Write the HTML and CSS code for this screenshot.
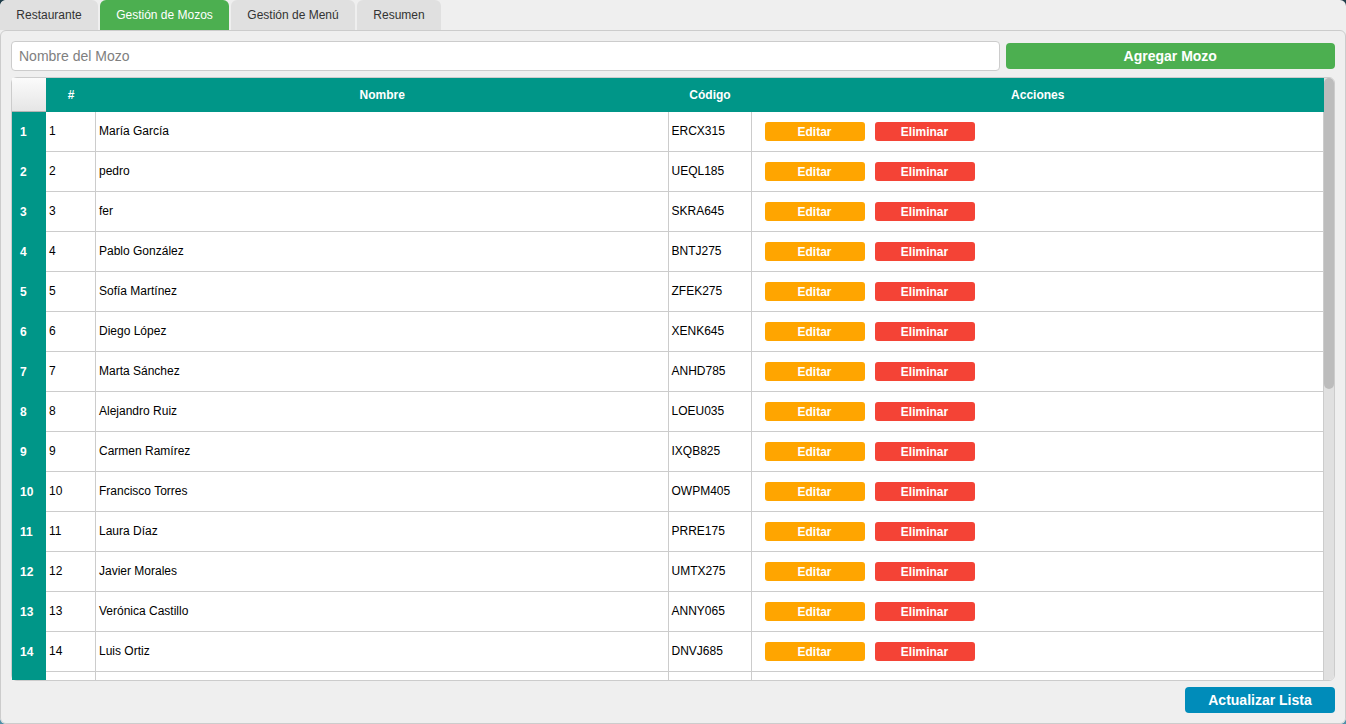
FILE: index.html
```html
<!DOCTYPE html>
<html lang="es">
<head>
<meta charset="utf-8">
<title>Gestión de Mozos</title>
<link rel="stylesheet" href="styles.css">
</head>
<body>
<div class="window">
  <nav class="tabs" role="tablist">
    <button class="tab" role="tab" type="button">Restaurante</button>
    <button class="tab tab-active" role="tab" type="button" aria-selected="true">Gestión de Mozos</button>
    <button class="tab" role="tab" type="button">Gestión de Menú</button>
    <button class="tab" role="tab" type="button">Resumen</button>
  </nav>
  <main class="panel">
    <form class="add-form">
      <input class="name-input" type="text" placeholder="Nombre del Mozo" aria-label="Nombre del Mozo">
      <button class="btn btn-add" type="button">Agregar Mozo</button>
    </form>
    <div class="frame">
      <div class="viewport">
        <table class="grid">
          <colgroup><col class="col-head"><col class="col-num"><col><col class="col-code"><col></colgroup>
          <thead>
            <tr><td class="corner"></td><th scope="col">#</th><th scope="col">Nombre</th><th scope="col">Código</th><th scope="col">Acciones</th></tr>
          </thead>
          <tbody>
            <tr><th scope="row">1</th><td>1</td><td>María García</td><td>ERCX315</td><td><div class="actions"><button class="act act-edit" type="button">Editar</button><button class="act act-delete" type="button">Eliminar</button></div></td></tr>
            <tr><th scope="row">2</th><td>2</td><td>pedro</td><td>UEQL185</td><td><div class="actions"><button class="act act-edit" type="button">Editar</button><button class="act act-delete" type="button">Eliminar</button></div></td></tr>
            <tr><th scope="row">3</th><td>3</td><td>fer</td><td>SKRA645</td><td><div class="actions"><button class="act act-edit" type="button">Editar</button><button class="act act-delete" type="button">Eliminar</button></div></td></tr>
            <tr><th scope="row">4</th><td>4</td><td>Pablo González</td><td>BNTJ275</td><td><div class="actions"><button class="act act-edit" type="button">Editar</button><button class="act act-delete" type="button">Eliminar</button></div></td></tr>
            <tr><th scope="row">5</th><td>5</td><td>Sofía Martínez</td><td>ZFEK275</td><td><div class="actions"><button class="act act-edit" type="button">Editar</button><button class="act act-delete" type="button">Eliminar</button></div></td></tr>
            <tr><th scope="row">6</th><td>6</td><td>Diego López</td><td>XENK645</td><td><div class="actions"><button class="act act-edit" type="button">Editar</button><button class="act act-delete" type="button">Eliminar</button></div></td></tr>
            <tr><th scope="row">7</th><td>7</td><td>Marta Sánchez</td><td>ANHD785</td><td><div class="actions"><button class="act act-edit" type="button">Editar</button><button class="act act-delete" type="button">Eliminar</button></div></td></tr>
            <tr><th scope="row">8</th><td>8</td><td>Alejandro Ruiz</td><td>LOEU035</td><td><div class="actions"><button class="act act-edit" type="button">Editar</button><button class="act act-delete" type="button">Eliminar</button></div></td></tr>
            <tr><th scope="row">9</th><td>9</td><td>Carmen Ramírez</td><td>IXQB825</td><td><div class="actions"><button class="act act-edit" type="button">Editar</button><button class="act act-delete" type="button">Eliminar</button></div></td></tr>
            <tr><th scope="row">10</th><td>10</td><td>Francisco Torres</td><td>OWPM405</td><td><div class="actions"><button class="act act-edit" type="button">Editar</button><button class="act act-delete" type="button">Eliminar</button></div></td></tr>
            <tr><th scope="row">11</th><td>11</td><td>Laura Díaz</td><td>PRRE175</td><td><div class="actions"><button class="act act-edit" type="button">Editar</button><button class="act act-delete" type="button">Eliminar</button></div></td></tr>
            <tr><th scope="row">12</th><td>12</td><td>Javier Morales</td><td>UMTX275</td><td><div class="actions"><button class="act act-edit" type="button">Editar</button><button class="act act-delete" type="button">Eliminar</button></div></td></tr>
            <tr><th scope="row">13</th><td>13</td><td>Verónica Castillo</td><td>ANNY065</td><td><div class="actions"><button class="act act-edit" type="button">Editar</button><button class="act act-delete" type="button">Eliminar</button></div></td></tr>
            <tr><th scope="row">14</th><td>14</td><td>Luis Ortiz</td><td>DNVJ685</td><td><div class="actions"><button class="act act-edit" type="button">Editar</button><button class="act act-delete" type="button">Eliminar</button></div></td></tr>
            <tr><th scope="row"></th><td></td><td></td><td></td><td></td></tr>
          </tbody>
        </table>
      </div>
      <div class="scrollbar"><div class="thumb"></div></div>
    </div>
    <div class="footer">
      <button class="btn btn-refresh" type="button">Actualizar Lista</button>
    </div>
  </main>
</div>
</body>
</html>
```
FILE: styles.css
```css
* { box-sizing: border-box; }

body {
  margin: 0;
  background: linear-gradient(#1f3d49 50%, #4d8fa8 50%);
  font-family: "Liberation Sans", Arial, sans-serif;
  font-size: 12px;
  color: #000;
}

button, input { font-family: inherit; }
button { border: 0; padding: 0; }

.window {
  display: flex;
  flex-direction: column;
  height: 100vh;
  background: #efefef;
  border-radius: 6px;
  overflow: hidden;
}

.tabs {
  display: grid;
  grid-template-columns: 98px 129px 124px 84px;
  gap: 2px;
}

.tab {
  height: 30px;
  border-radius: 6px 6px 0 0;
  background: #e0e0e0;
  color: #333;
  font-size: 12px;
}

.tab-active { background: #4caf50; color: #fff; }

.panel {
  flex: 1;
  min-height: 0;
  display: flex;
  flex-direction: column;
  gap: 6px;
  padding: 10px;
  border: 1px solid #ccc;
  border-radius: 6px;
}

.add-form {
  display: grid;
  grid-template-columns: 3fr 1fr;
  align-items: center;
  gap: 6px;
}

.name-input {
  min-width: 0;
  height: 30px;
  padding: 0 7px;
  border: 1px solid #ccc;
  border-radius: 4px;
  background: #fff;
  font-size: 14px;
}

.name-input::placeholder { color: #808080; }

.btn {
  height: 26px;
  border-radius: 4px;
  color: #fff;
  font-size: 14px;
  font-weight: bold;
}

.btn-add { background: #4caf50; }
.btn-refresh { width: 150px; background: #008cba; }

.frame {
  flex: 1;
  min-height: 0;
  display: flex;
  border: 1px solid #ccc;
  border-radius: 6px;
  background: #fff;
}

.viewport { flex: 1; overflow: hidden; }

.grid {
  width: 100%;
  table-layout: fixed;
  border-collapse: separate;
  border-spacing: 0;
}

.col-head { width: 34px; }
.col-num { width: 50px; }
.col-code { width: 83px; }

.grid th { background: #009688; color: #fff; font-weight: bold; }
.grid thead th { height: 34px; padding: 0; text-align: center; }

.grid .corner {
  padding: 0;
  background: linear-gradient(#fbfbfb, #e6e6e6);
  border-bottom: 1px solid #b4b4b4;
}

.grid tbody th { height: 40px; padding: 0 0 0 8px; text-align: left; }

.grid tbody td {
  height: 40px;
  padding: 0 3px 1px;
  border-right: 1px solid #ccc;
  border-bottom: 1px solid #ccc;
}

.actions { display: flex; gap: 10px; padding-left: 10px; }

.act {
  width: 100px;
  height: 19px;
  padding-top: 1px;
  border-radius: 3px;
  color: #fff;
  font-size: 12px;
  font-weight: bold;
}

.act-edit { background: #ffa500; }
.act-delete { background: #f44336; }

.scrollbar {
  width: 10px;
  border-radius: 0 5px 5px 0;
  background: #e0e0e0;
}

.thumb { height: 311px; border-radius: 5px; background: #bcbcbc; }

.footer { display: flex; justify-content: flex-end; }
```
